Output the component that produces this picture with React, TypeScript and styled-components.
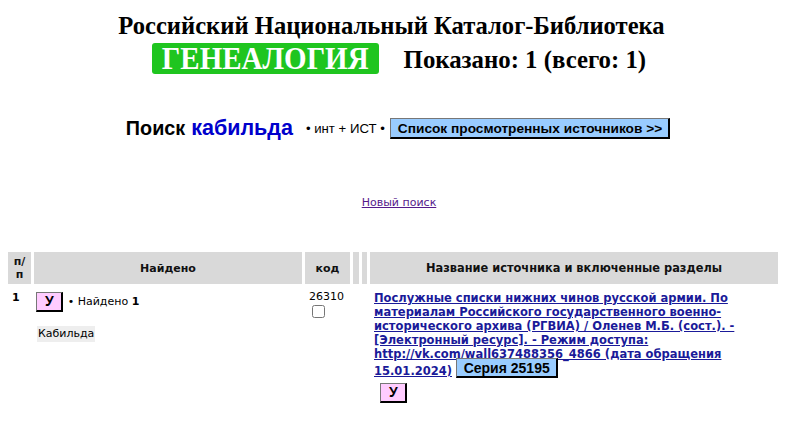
import React from 'react';
import styled, {createGlobalStyle, css} from "styled-components";

const GlobalStyle = createGlobalStyle`
  body {
    margin: 0;
    background: #fff;
    font-family: "Liberation Serif", serif;
  }
`;

function App(): JSX.Element {
    return (
        <Page>
            <GlobalStyle/>
            <Header>
                <Title>Российский Национальный Каталог-Библиотека</Title>
                <HeaderRow>
                    <Badge><span>ГЕНЕАЛОГИЯ</span></Badge>
                    <Shown>Показано: 1 (всего: 1)</Shown>
                </HeaderRow>
            </Header>

            <SearchLine>
                <SearchLabel>Поиск</SearchLabel>
                <SearchWord>кабильда</SearchWord>
                <SearchMode>• инт + ИСТ •</SearchMode>
                <ListButton>Список просмотренных источников &gt;&gt;</ListButton>
            </SearchLine>

            <NewSearch>
                <a href="#">Новый поиск</a>
            </NewSearch>

            <Results>
                <colgroup>
                    <col style={{width: 23}}/>
                    <col style={{width: 268}}/>
                    <col style={{width: 45}}/>
                    <col style={{width: 6}}/>
                    <col style={{width: 5}}/>
                    <col/>
                </colgroup>
                <thead>
                <tr>
                    <Th>п/п</Th>
                    <Th>Найдено</Th>
                    <Th>код</Th>
                    <Th/>
                    <Th/>
                    <Th $wide>Название источника и включенные разделы</Th>
                </tr>
                </thead>
                <tbody>
                <tr>
                    <Td><b>1</b></Td>
                    <Td>
                        <FoundLine>
                            <PinkButton>У</PinkButton>
                            <span>• Найдено <b>1</b></span>
                        </FoundLine>
                        <Word>Кабильда</Word>
                    </Td>
                    <Td>
                        <Code>26310</Code>
                        <Check type="checkbox"/>
                    </Td>
                    <Td/>
                    <Td/>
                    <Td $fs={11.5}>
                        <SourceLink href="#">
                            Послужные списки нижних чинов русской армии. По материалам Российского
                            государственного военно-исторического архива (РГВИА) / Оленев М.Б. (сост.). -
                            [Электронный ресурс]. - Режим доступа: http://vk.com/wall637488356_4866 (дата
                            обращения 15.01.2024)
                        </SourceLink>{' '}
                        <SeriesButton>Серия 25195</SeriesButton>
                        <Below>
                            <PinkButton>У</PinkButton>
                        </Below>
                    </Td>
                </tr>
                </tbody>
            </Results>
        </Page>
    );
}

const Page = styled.div`
  width: 796px;
  padding-top: 10px;
`;

const Header = styled.div`
  display: flex;
  flex-direction: column;
  align-items: center;
`;

const Title = styled.h1`
  margin: 0 0 0 -13px;
  font-family: "Liberation Serif", serif;
  font-size: 24.6px;
  line-height: 32px;
  font-weight: bold;
  color: #000;
`;

const HeaderRow = styled.div`
  display: flex;
  align-items: center;
  gap: 25px;
  margin-left: 2px;
  margin-top: 1px;
`;

const Badge = styled.div`
  background: #1fc51f;
  color: #fff;
  font-family: "Liberation Serif", serif;
  font-weight: bold;
  font-size: 29px;
  line-height: 31px;
  padding: 0 10px 0 10px;
  border-radius: 3px;

  span {
    display: inline-block;
    transform: scaleY(1.1);
  }
`;

const Shown = styled.div`
  font-family: "Liberation Serif", serif;
  font-weight: bold;
  font-size: 24.8px;
  padding-top: 2px;
`;

const SearchLine = styled.div`
  display: flex;
  align-items: center;
  justify-content: center;
  margin-top: 42px;
  margin-left: 0;
  font-family: "Liberation Sans", Arial, sans-serif;
`;

const SearchLabel = styled.span`
  font-weight: bold;
  font-size: 19.8px;
  margin-right: 6px;
`;

const SearchWord = styled.span`
  font-weight: bold;
  font-size: 21.5px;
  color: #0000cc;
  margin-right: 13px;
`;

const SearchMode = styled.span`
  font-size: 13.2px;
  margin-right: 5px;
`;

const raisedButton = css`
  font-family: "Liberation Sans", Arial, sans-serif;
  font-weight: bold;
  color: #000;
  border-top: 1px solid #777;
  border-left: 1px solid #777;
  border-right: 2px solid #000;
  border-bottom: 2px solid #000;
`;

const ListButton = styled.span`
  ${raisedButton};
  display: inline-block;
  background: #99ccff;
  font-size: 13.7px;
  line-height: 17px;
  padding: 1px 6px 0 7px;
`;

const SeriesButton = styled.span`
  ${raisedButton};
  background: #99ccff;
  font-size: 14px;
  line-height: 14px;
  padding: 1px 6px 0 7px;
  vertical-align: 2px;
`;

const PinkButton = styled.span`
  ${raisedButton};
  display: inline-block;
  background: #ffccff;
  font-size: 14px;
  line-height: 17px;
  padding: 0 7px 0 8px;
`;

const NewSearch = styled.div`
  text-align: center;
  margin-top: 51px;
  margin-left: 2px;

  a {
    font-family: "DejaVu Sans", Verdana, sans-serif;
    font-size: 11px;
    color: #551a8b;
  }
`;

const Results = styled.table`
  margin: 39px 0 0 5px;
  width: 776px;
  border-spacing: 3px;
  table-layout: fixed;
  font-family: "DejaVu Sans", Verdana, sans-serif;
  font-size: 11px;
`;

const Th = styled.th<{ $wide?: boolean }>`
  background: #d9d9d9;
  font-weight: bold;
  font-size: ${p => (p.$wide ? 11.4 : 11)}px;
  height: 32px;
  padding: 0 2px;
  line-height: 13px;
  color: #111;
`;

const Td = styled.td<{ $fs?: number }>`
  vertical-align: top;
  padding: 4px 4px 3px;
  font-size: ${p => p.$fs ?? 11}px;
  line-height: 14px;
`;

const FoundLine = styled.div`
  display: flex;
  align-items: center;
  gap: 5px;
  margin: 1px 0 0 -2px;
`;

const Word = styled.span`
  display: inline-block;
  margin-top: 14px;
  margin-left: -1px;
  background: #eeeeee;
  padding: 1px 1px;
`;

const Code = styled.div`
  margin-top: -1px;
`;

const Check = styled.input`
  margin: 1px 0 0 3px;
  width: 13px;
  height: 13px;
`;

const SourceLink = styled.a`
  font-weight: bold;
  color: #1a1a99;
  text-decoration: underline;
`;

const Below = styled.div`
  margin: 5px 0 0 6px;
`;

export default App;
